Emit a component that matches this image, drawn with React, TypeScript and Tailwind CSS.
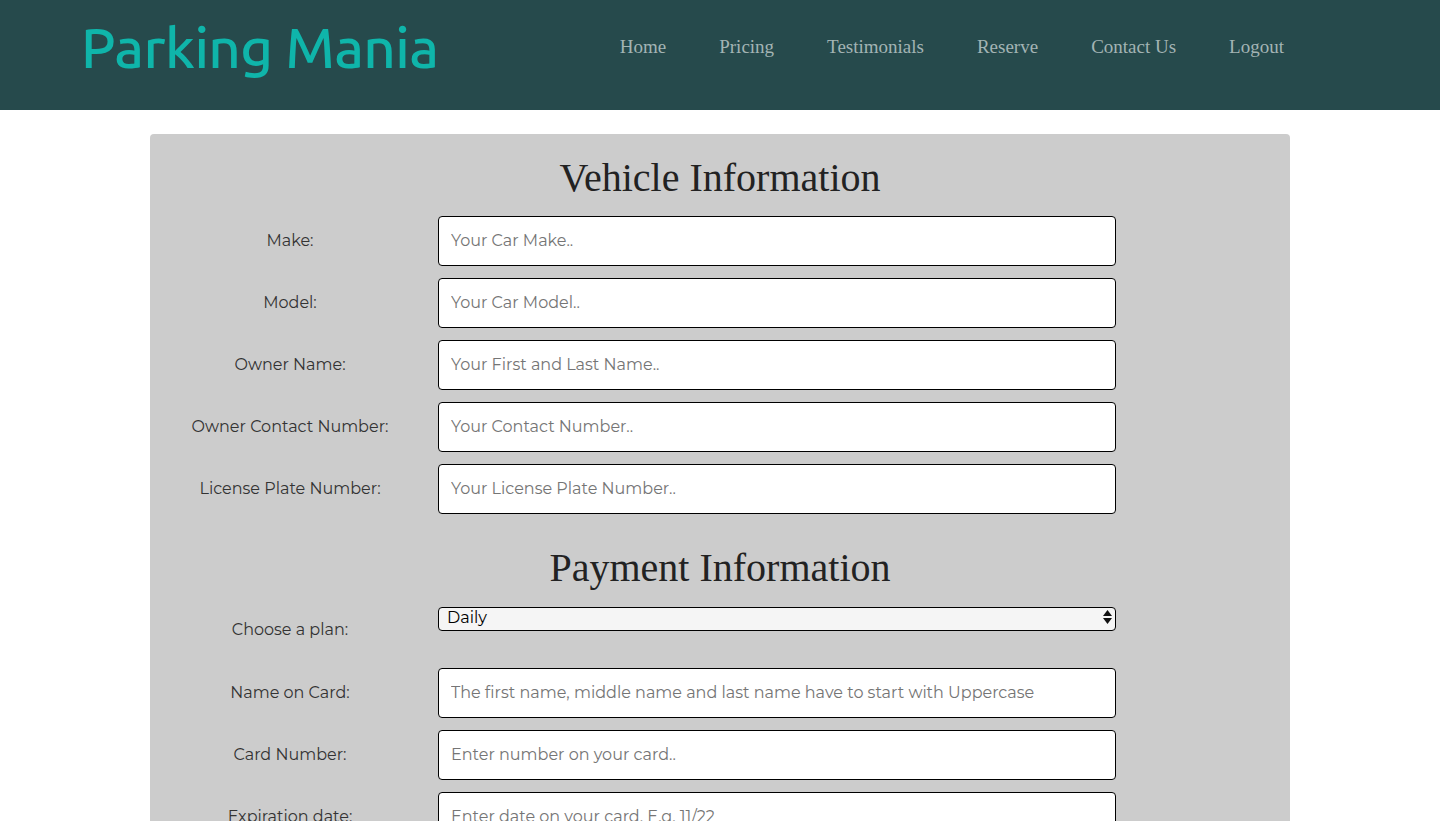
import React from "react";

const vehicle = [
  ["Make:", "Your Car Make.."],
  ["Model:", "Your Car Model.."],
  ["Owner Name:", "Your First and Last Name.."],
  ["Owner Contact Number:", "Your Contact Number.."],
  ["License Plate Number:", "Your License Plate Number.."],
];

const payment = [
  ["Name on Card:", "The first name, middle name and last name have to start with Uppercase"],
  ["Card Number:", "Enter number on your card.."],
  ["Expiration date:", "Enter date on your card. E.g. 11/22"],
];

const labelFont = "font-['Montserrat','Noto_Sans','DejaVu_Sans',sans-serif]";

function Row({ label, ph }: { label: string; ph: string }) {
  return (
    <div className="flex items-center h-[50px]">
      <div className={`w-[280px] text-center text-[16px] text-[#333] ${labelFont}`}>{label}</div>
      <input
        placeholder={ph}
        className={`ml-[8px] w-[678px] h-[50px] bg-white border-[1.5px] border-black rounded-[4px] px-[12px] pb-[2px] text-[16px] placeholder:text-[#757575] outline-none ${labelFont}`}
      />
    </div>
  );
}

export default function App() {
  return (
    <div className="min-h-screen bg-white">
      <header className="h-[110px] bg-[#264a4c] flex items-center">
        <div className="ml-[81px] text-[56.5px] leading-none text-[#0fb5aa] font-['Ubuntu','Noto_Sans',sans-serif] font-medium tracking-[-0.6px] -mt-[16px]">
          Parking Mania
        </div>
        <nav className="ml-auto mr-[156px] flex gap-[53px] text-[19px] text-[#a3b4b4] font-['Liberation_Serif',serif] -mt-[15px]">
          <a>Home</a>
          <a>Pricing</a>
          <a>Testimonials</a>
          <a>Reserve</a>
          <a>Contact Us</a>
          <a>Logout</a>
        </nav>
      </header>
      <main className="pt-[24px] flex justify-center">
        <div className="w-[1140px] bg-[#cccccc] rounded-t-[4px] pt-[22px] pb-[40px]">
          <h2 className="text-center text-[40px] leading-[44px] text-[#222] font-['Liberation_Serif',serif]">
            Vehicle Information
          </h2>
          <div className="mt-[16px] flex flex-col gap-[12px]">
            {vehicle.map(([l, p]) => (
              <Row key={l} label={l} ph={p} />
            ))}
          </div>
          <h2 className="mt-[32px] text-center text-[40px] leading-[44px] text-[#222] font-['Liberation_Serif',serif]">
            Payment Information
          </h2>
          <div className="mt-[16px] flex flex-col gap-[12px]">
            <div className="flex h-[50px]">
              <div className={`w-[280px] pt-[12px] text-center text-[16px] text-[#333] ${labelFont}`}>Choose a plan:</div>
              <div className="ml-[8px] relative w-[678px] h-[24px] -mt-[1px]">
                <select
                  className={`appearance-none w-full h-[24px] bg-[#f5f5f5] border-[1.5px] border-black rounded-[4px] pl-[8px] pb-[2px] text-[16px] leading-none text-black outline-none ${labelFont}`}
                >
                  <option>Daily</option>
                </select>
                <svg className="absolute right-[4px] top-[5px] pointer-events-none" width="9" height="14" viewBox="0 0 9 14">
                  <path d="M4.5 0 L9 6 L0 6 Z" fill="#111" />
                  <path d="M0 8 L9 8 L4.5 14 Z" fill="#111" />
                </svg>
              </div>
            </div>
            {payment.map(([l, p]) => (
              <Row key={l} label={l} ph={p} />
            ))}
          </div>
        </div>
      </main>
    </div>
  );
}
